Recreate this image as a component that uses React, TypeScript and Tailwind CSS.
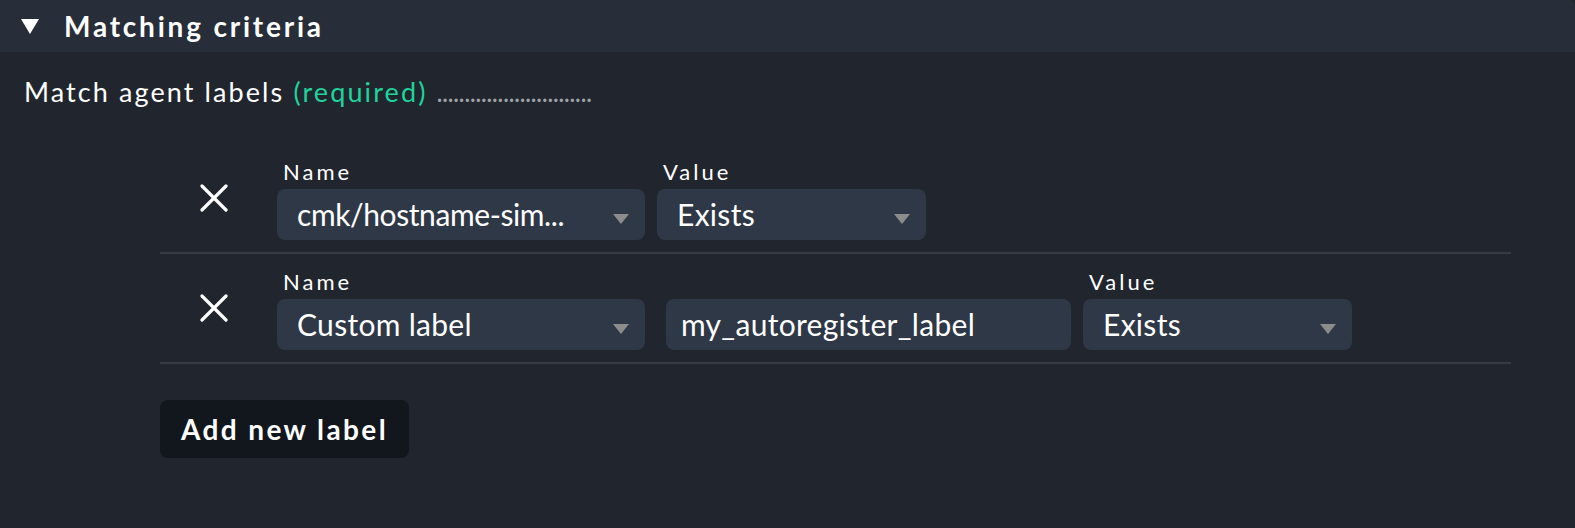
const Select = ({ text, width, tight }: { text: string; width: string; tight?: boolean }) => (
  <div className={`${width} h-[51px] rounded-lg bg-[#2f3846] flex items-center justify-between pl-5 pr-4`}>
    <span className={`text-[30px] text-white truncate ${tight ? "tracking-[-0.4px]" : "tracking-[0.3px]"}`}>{text}</span>
    <span className="w-0 h-0 border-l-[8.5px] border-r-[8.5px] border-t-[10px] border-l-transparent border-r-transparent border-t-[#8c8c8c] mt-[9px]" />
  </div>
);

const Label = ({ children }: { children: string }) => (
  <div className="text-[22px] leading-[18px] tracking-[3px] text-white pl-1.5 h-[26px]">{children}</div>
);

const RemoveButton = () => (
  <div className="w-[117px] pl-[40px] pt-[21px] shrink-0">
    <svg width="28" height="28" viewBox="0 0 28 28" fill="none" stroke="white" strokeWidth="3.2" strokeLinecap="round">
      <line x1="2" y1="2" x2="26" y2="26" />
      <line x1="26" y1="2" x2="2" y2="26" />
    </svg>
  </div>
);

export default function App() {
  return (
    <div className="w-[1575px] h-[528px] bg-[#21262e] font-['Lato',sans-serif] text-white overflow-hidden">
      <div className="h-[52px] bg-[#282e39] flex items-center pl-[21px] rounded-tr-md">
        <span className="w-0 h-0 border-l-[9.5px] border-r-[9.5px] border-t-[15px] border-l-transparent border-r-transparent border-t-white" />
        <span className="ml-[25px] text-[28px] font-bold tracking-[2.8px]">Matching criteria</span>
      </div>

      <div className="pl-6 pt-[20px] text-[27px] leading-[40px] tracking-[2.1px]">
        Match agent labels <span className="text-[#1fd39c]">(required)</span>{" "}
        <span className="text-[#a0a3a8] text-[26px] tracking-[-0.6px]">............................</span>
      </div>

      <div className="ml-[160px] w-[1351px] mt-[32px]">
        <div className="flex pt-[19px] pb-[12px] border-b-2 border-[#343b47]">
          <RemoveButton />
          <div className="flex gap-3">
            <div>
              <Label>Name</Label>
              <Select text="cmk/hostname-sim..." width="w-[368px]" tight />
            </div>
            <div>
              <Label>Value</Label>
              <Select text="Exists" width="w-[269px]" />
            </div>
          </div>
        </div>

        <div className="flex pt-[19px] pb-[12px] border-b-2 border-[#343b47]">
          <RemoveButton />
          <div className="flex items-end">
            <div>
              <Label>Name</Label>
              <Select text="Custom label" width="w-[368px]" />
            </div>
            <div className="ml-[21px] w-[405px] h-[51px] rounded-lg bg-[#2f3846] flex items-center pl-[15px] text-[30px] tracking-[0.3px]">
              my_autoregister_label
            </div>
            <div className="ml-3">
              <Label>Value</Label>
              <Select text="Exists" width="w-[269px]" />
            </div>
          </div>
        </div>

        <button className="mt-[36px] h-[58px] w-[249px] rounded-lg bg-[#12171d] text-[28px] font-bold tracking-[2.4px] text-white">
          Add new label
        </button>
      </div>
    </div>
  );
}
